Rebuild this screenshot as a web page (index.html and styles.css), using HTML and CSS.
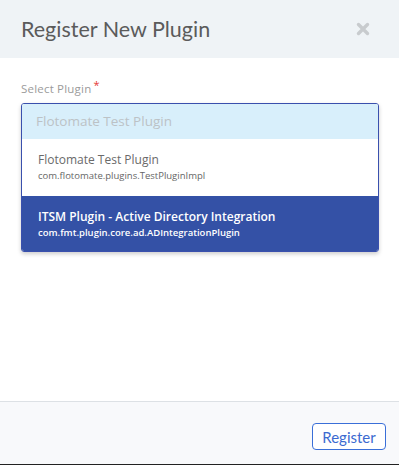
FILE: index.html
```html
<!DOCTYPE html>
<html lang="en">

<head>
  <meta charset="UTF-8">
  <meta name="viewport" content="width=device-width, initial-scale=1.0">
  <title>Register New Plugin</title>
  <link rel="stylesheet" href="styles.css">
</head>

<body>
  <div class="modal">
    <div class="modal-header">
      <h1>Register New Plugin</h1>
      <svg class="close" width="14" height="14" viewBox="0 0 14 14">
        <path d="M2.5 2.5 L11.5 11.5 M11.5 2.5 L2.5 11.5" stroke="#c8cbce" stroke-width="3.4" stroke-linecap="round" />
      </svg>
    </div>

    <div class="modal-body">
      <label class="field-label">Select Plugin<span class="req">*</span></label>
      <div class="picker">
        <div class="picker-input">Flotomate Test Plugin</div>
        <div class="option">
          <div class="option-title">Flotomate Test Plugin</div>
          <div class="option-sub">com.flotomate.plugins.TestPluginImpl</div>
        </div>
        <div class="option selected">
          <div class="option-title">ITSM Plugin - Active Directory Integration</div>
          <div class="option-sub">com.fmt.plugin.core.ad.ADIntegrationPlugin</div>
        </div>
      </div>
    </div>

    <div class="modal-footer">
      <button class="btn-register">Register</button>
    </div>
  </div>
</body>

</html>
```

FILE: styles.css
```css
body {
  margin: 0;
  padding: 0;
  font-family: 'Open Sans', sans-serif;
  background: #ffffff;
}

.modal {
  display: flex;
  flex-direction: column;
  height: 464px;
  border-bottom: 1px solid #222;
}

.modal-header {
  display: flex;
  align-items: center;
  justify-content: space-between;
  height: 58px;
  padding: 0 29px 0 21px;
  background: #eff3f6;
}

.modal-header h1 {
  margin: 0;
  font-family: Lato, sans-serif;
  font-size: 21.5px;
  font-weight: 400;
  color: #5b5b5b;
}

.close {
  display: block;
}

.modal-body {
  flex: 1;
  padding: 23px 20px 0 21px;
}

.field-label {
  display: block;
  font-size: 11.5px;
  color: #9b9b9b;
  margin-bottom: 7px;
  letter-spacing: 0.2px;
}

.req {
  color: #e53935;
  margin-left: 2px;
  position: relative;
  top: -4px;
  font-size: 11px;
}

.picker {
  border: 1px solid #3a50ad;
  border-radius: 3px;
  overflow: hidden;
  box-shadow: 0 2px 4px rgba(0, 0, 0, 0.2);
}

.picker-input {
  height: 35px;
  line-height: 35px;
  padding: 0 14px;
  background: #d8effb;
  color: #bcc2c6;
  font-size: 13.5px;
}

.option {
  padding: 12px 16px 0;
  height: 45px;
  background: #ffffff;
}

.option-title {
  font-size: 12px;
  color: #6a6a6a;
  line-height: 17px;
}

.option-sub {
  font-size: 9.5px;
  color: #666;
  line-height: 16px;
}

.option.selected {
  background: #3451a6;
  height: 43px;
}

.option.selected .option-title {
  color: #fff;
  font-weight: 600;
}

.option.selected .option-sub {
  color: #fff;
  font-weight: 600;
}

.modal-footer {
  display: flex;
  justify-content: flex-end;
  align-items: flex-start;
  height: 62px;
  padding: 0 13px 0 0;
  border-top: 1px solid #dde1e5;
  background: #f8f9fb;
}

.btn-register {
  margin-top: 21px;
  width: 74px;
  height: 27px;
  border: 1px solid #3a6fd8;
  border-radius: 4px;
  background: #ffffff;
  color: #3b6ad0;
  font-family: Lato, sans-serif;
  font-size: 15px;
  cursor: pointer;
}
```
